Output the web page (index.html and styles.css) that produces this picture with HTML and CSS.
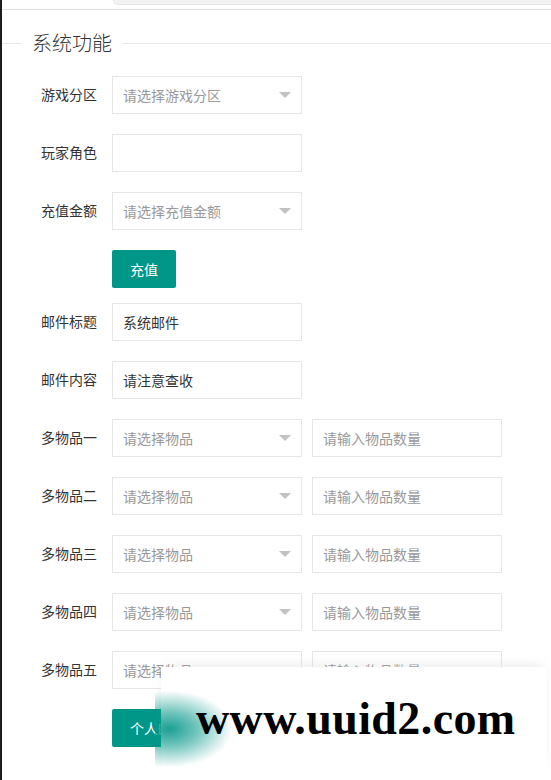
FILE: index.html
```html
<!DOCTYPE html>
<html lang="zh">
<head>
<meta charset="utf-8">
<title>系统功能</title>
<link rel="stylesheet" href="styles.css">
</head>
<body>
<div class="page">
  <div class="topbar"><div class="topbar-field"></div></div>
  <div class="legend"><span class="legend-line short"></span><span class="legend-text">系统功能</span><span class="legend-line long"></span></div>
  <form class="form">
    <div class="row">
      <label class="label">游戏分区</label>
      <div class="select"><span class="ph">请选择游戏分区</span><i class="arrow"></i></div>
    </div>
    <div class="row">
      <label class="label">玩家角色</label>
      <input class="input" type="text">
    </div>
    <div class="row">
      <label class="label">充值金额</label>
      <div class="select"><span class="ph">请选择充值金额</span><i class="arrow"></i></div>
    </div>
    <div class="row btn-row">
      <button class="btn" type="button">充值</button>
    </div>
    <div class="row">
      <label class="label">邮件标题</label>
      <input class="input" type="text" value="系统邮件">
    </div>
    <div class="row">
      <label class="label">邮件内容</label>
      <input class="input" type="text" value="请注意查收">
    </div>
    <div class="row">
      <label class="label">多物品一</label>
      <div class="select"><span class="ph">请选择物品</span><i class="arrow"></i></div>
      <input class="input second" type="text" placeholder="请输入物品数量">
    </div>
    <div class="row">
      <label class="label">多物品二</label>
      <div class="select"><span class="ph">请选择物品</span><i class="arrow"></i></div>
      <input class="input second" type="text" placeholder="请输入物品数量">
    </div>
    <div class="row">
      <label class="label">多物品三</label>
      <div class="select"><span class="ph">请选择物品</span><i class="arrow"></i></div>
      <input class="input second" type="text" placeholder="请输入物品数量">
    </div>
    <div class="row">
      <label class="label">多物品四</label>
      <div class="select"><span class="ph">请选择物品</span><i class="arrow"></i></div>
      <input class="input second" type="text" placeholder="请输入物品数量">
    </div>
    <div class="row">
      <label class="label">多物品五</label>
      <div class="select"><span class="ph">请选择物品</span><i class="arrow"></i></div>
      <input class="input second" type="text" placeholder="请输入物品数量">
    </div>
    <div class="row btn-row">
      <button class="btn" type="button">个人邮件</button>
    </div>
  </form>
  <div class="watermark"><span class="wm-blob"></span><span class="wm-text">www.uuid2.com</span></div>
</div>
</body>
</html>
```
FILE: styles.css
```css
html, body {
  margin: 0;
  padding: 0;
  background: #fff;
}
body {
  font-family: "Noto Sans CJK SC", "Noto Sans", sans-serif;
  color: #333;
  font-size: 14px;
}
.page {
  position: relative;
  height: 780px;
  overflow: hidden;
  border-left: 2px solid #1c1c1c;
  box-sizing: border-box;
}
.topbar {
  height: 9px;
  border-bottom: 1px solid #e2e2e2;
}
.topbar-field {
  margin-left: 111px;
  height: 4px;
  background: #f2f2f2;
  border: 1px solid #e6e6e6;
  border-top: none;
  border-right: none;
  border-radius: 0 0 0 6px;
}
.legend {
  display: flex;
  align-items: center;
  height: 28px;
  margin-top: 19px;
}
.legend-line {
  height: 1px;
  background: #e6e6e6;
}
.legend-line.short { width: 20px; }
.legend-line.long { flex: 1; }
.legend-text {
  padding: 0 10px;
  font-size: 20px;
  font-weight: 300;
  color: #333;
  line-height: 28px;
}
.form {
  margin-top: 19px;
}
.row {
  display: flex;
  align-items: center;
  height: 38px;
  margin-bottom: 20px;
}
.row.btn-row {
  margin-bottom: 15px;
  padding-left: 110px;
}
.label {
  width: 110px;
  box-sizing: border-box;
  padding-right: 15px;
  text-align: right;
  font-size: 14px;
  color: #333;
  position: relative;
  top: -1px;
}
.select, .input {
  width: 190px;
  height: 38px;
  box-sizing: border-box;
  border: 1px solid #e6e6e6;
  background: #fff;
  padding: 0 10px;
  font-family: inherit;
  font-size: 14px;
  color: #333;
  outline: none;
  margin: 0;
}
.select {
  display: flex;
  align-items: center;
  justify-content: space-between;
}
.ph { color: #999; }
.input::placeholder { color: #999; opacity: 1; }
.input.second { margin-left: 10px; }
.arrow {
  width: 0;
  height: 0;
  border-left: 6px solid transparent;
  border-right: 6px solid transparent;
  border-top: 6px solid #c2c2c2;
}
.btn {
  height: 38px;
  padding: 0 18px;
  border: none;
  border-radius: 2px;
  background: #009688;
  color: #fff;
  font-family: inherit;
  font-size: 14px;
  cursor: pointer;
}
.watermark {
  position: absolute;
  left: 159px;
  top: 667px;
  width: 386px;
  height: 108px;
  background: #fff;
  box-shadow: 0 -5px 10px -4px rgba(200, 200, 200, 0.4);
}
.wm-blob {
  position: absolute;
  left: -6px;
  top: 22px;
  width: 80px;
  height: 80px;
  background: radial-gradient(ellipse at 18% 50%, rgba(0, 150, 136, 0.9) 0%, rgba(0, 150, 136, 0.55) 30%, rgba(255, 255, 255, 0) 68%);
}
.wm-text {
  position: absolute;
  left: 35px;
  top: 27px;
  font-family: "Liberation Serif", serif;
  font-weight: 700;
  font-size: 46px;
  line-height: 50px;
  color: #000;
  letter-spacing: 0.4px;
}
```
